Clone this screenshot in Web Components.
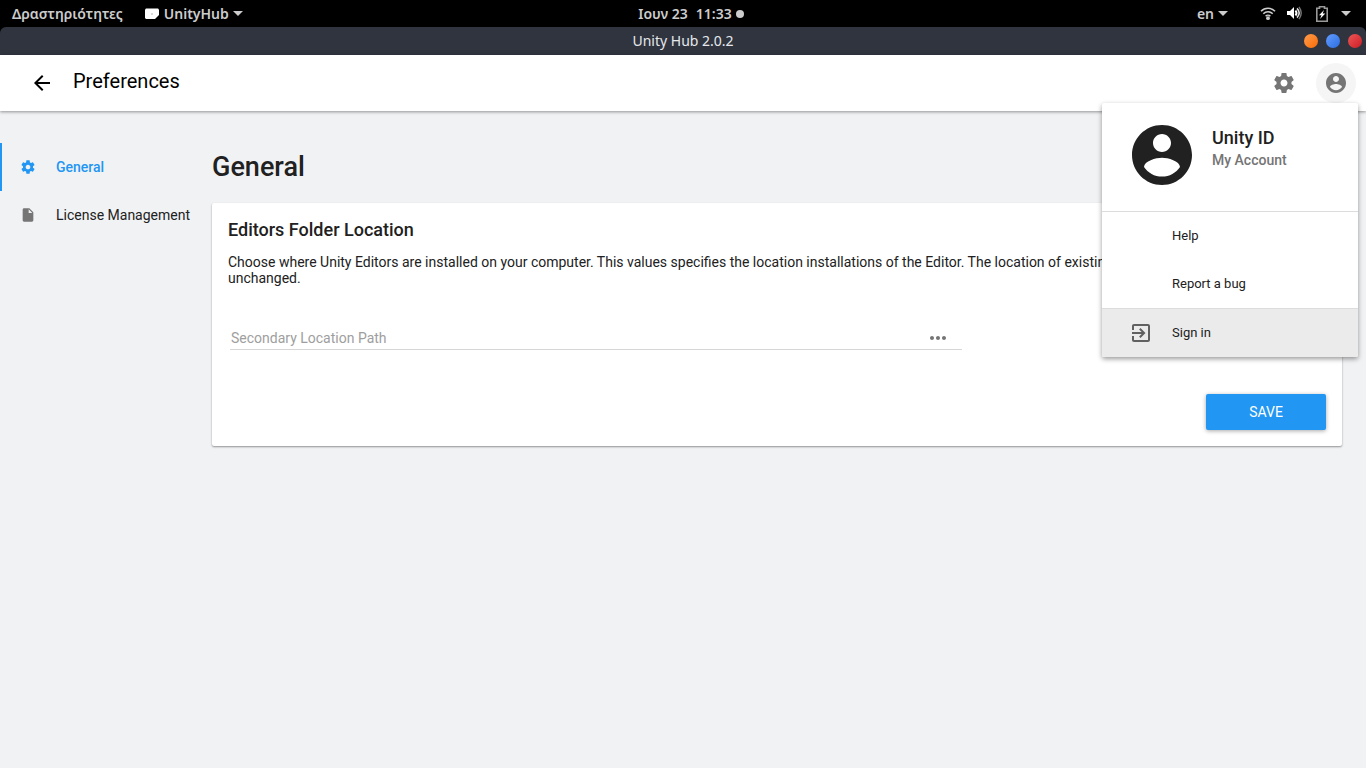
<!DOCTYPE html>
<html lang="en">
<head>
<meta charset="utf-8">
<meta name="viewport" content="width=device-width, initial-scale=1">
<title>Unity Hub 2.0.2</title>
<style>
    html, body {
        height: 100%;
        margin: 0;
    }
    body {
        background: #f1f2f4;
        color: #212121;
        font: 14px/16px Roboto, sans-serif;
    }
</style>
</head>
<body>
<hub-app></hub-app>
<script>
const icons = {
    back: 'M20 11H7.83l5.59-5.59L12 4l-8 8 8 8 1.41-1.41L7.83 13H20v-2z',
    gear: 'M19.43 12.98c.04-.32.07-.64.07-.98s-.03-.66-.07-.98l2.11-1.65c.19-.15.24-.42.12-.64l-2-3.46c-.12-.22-.39-.3-.61-.22l-2.49 1c-.52-.4-1.08-.73-1.69-.98l-.38-2.65C14.46 2.18 14.25 2 14 2h-4c-.25 0-.46.18-.49.42l-.38 2.65c-.61.25-1.17.59-1.69.98l-2.49-1c-.23-.09-.49 0-.61.22l-2 3.46c-.13.22-.07.49.12.64l2.11 1.65c-.04.32-.07.65-.07.98s.03.66.07.98l-2.11 1.65c-.19.15-.24.42-.12.64l2 3.46c.12.22.39.3.61.22l2.49-1c.52.4 1.08.73 1.69.98l.38 2.65c.03.24.24.42.49.42h4c.25 0 .46-.18.49-.42l.38-2.65c.61-.25 1.17-.59 1.69-.98l2.49 1c.23.09.49 0 .61-.22l2-3.46c.12-.22.07-.49-.12-.64l-2.11-1.65zM12 15.5c-1.93 0-3.5-1.57-3.5-3.5s1.57-3.5 3.5-3.5 3.5 1.57 3.5 3.5-1.57 3.5-3.5 3.5z',
    account: 'M12 2C6.48 2 2 6.48 2 12s4.48 10 10 10 10-4.48 10-10S17.52 2 12 2zm0 3c1.66 0 3 1.34 3 3s-1.34 3-3 3-3-1.34-3-3 1.34-3 3-3zm0 14.2c-2.5 0-4.71-1.28-6-3.22.03-1.99 4-3.08 6-3.08 1.99 0 5.97 1.09 6 3.08-1.29 1.94-3.5 3.22-6 3.22z',
    file: 'M6 2c-1.1 0-1.99.9-1.99 2L4 20c0 1.1.89 2 1.99 2H18c1.1 0 2-.9 2-2V8l-6-6H6zm7 7V3.5L18.5 9H13z',
    more: 'M6 10c-1.1 0-2 .9-2 2s.9 2 2 2 2-.9 2-2-.9-2-2-2zm12 0c-1.1 0-2 .9-2 2s.9 2 2 2 2-.9 2-2-.9-2-2-2zm-6 0c-1.1 0-2 .9-2 2s.9 2 2 2 2-.9 2-2-.9-2-2-2z',
    signin: 'M10.09 15.59L11.5 17l5-5-5-5-1.41 1.41L12.67 11H3v2h9.67l-2.58 2.59zM19 3H5c-1.11 0-2 .9-2 2v4h2V5h14v14H5v-4H3v4c0 1.1.89 2 2 2h14c1.1 0 2-.9 2-2V5c0-1.1-.9-2-2-2z'
};

class HubIcon extends HTMLElement {
    get name() { return this.getAttribute('name') || ''; }
    connectedCallback() {
        if (this.shadowRoot)
            return;
        this.attachShadow({ mode: 'open' }).innerHTML = `
<style>
    :host {
        display: block;
        flex: none;
        width: var(--icon-size, 24px);
        height: var(--icon-size, 24px);
    }
    svg {
        display: block;
        width: 100%;
        height: 100%;
        fill: currentColor;
    }
</style>
<svg viewBox="0 0 24 24" aria-hidden="true"><path d="${icons[this.name]}"/></svg>
`;
    }
}
customElements.define('hub-icon', HubIcon);

class DesktopPanel extends HTMLElement {
    connectedCallback() {
        this.attachShadow({ mode: 'open' }).innerHTML = `
<style>
    :host {
        display: grid;
        grid-template-columns: 1fr auto 1fr;
        align-items: center;
        height: 27px;
        background: #000;
        color: #ccc;
        font: 600 14px/20px "Noto Sans", sans-serif;
    }
    div, button {
        display: flex;
        align-items: center;
    }
    button {
        padding: 0;
        border: 0;
        background: none;
        color: inherit;
        font: inherit;
    }
    svg { display: block; }
    .left {
        gap: 21px;
        padding-left: 12px;
    }
    .app, .lang { gap: 4px; }
    .clock {
        gap: 8px;
        padding-left: 16px;
    }
    .caret {
        border: 5px solid transparent;
        border-top-color: #ccc;
        border-bottom: 0;
    }
    .dot {
        width: 8px;
        height: 8px;
        margin-left: -4px;
        border-radius: 50%;
        background: #ccc;
    }
    .right {
        justify-content: flex-end;
        padding-right: 15px;
    }
    .status {
        gap: 11px;
        margin-left: 32px;
    }
</style>
<div class="left">
    <button>Δραστηριότητες</button>
    <button class="app">
        <svg width="16" height="16" viewBox="0 0 16 16"><path fill="#fff" d="M2 2.500h12l1 1v5.500l-4 4H2l-1-1V3.500z"/><circle cx="8" cy="8" r="1" fill="#ccc"/></svg>
        UnityHub <span class="caret"></span>
    </button>
</div>
<button class="clock"><span>Ιουν 23</span><span>11:33</span><span class="dot"></span></button>
<div class="right">
    <button class="lang">en <span class="caret"></span></button>
    <button class="status" aria-label="System">
        <svg width="16" height="16" viewBox="0 0 16 16" fill="none" stroke="#ccc"><path d="M1 5.200a9.800 9.800 0 0 1 14 0M3.300 7.800a6.500 6.500 0 0 1 9.400 0M5.600 10.200a3.400 3.400 0 0 1 4.800 0" stroke-width="1.600"/><circle cx="8" cy="12.200" r="1.900" fill="#ccc" stroke="none"/></svg>
        <svg width="16" height="16" viewBox="0 0 16 16" fill="none"><path fill="#fff" d="M0 5h3l4-4v12l-4-4H0z"/><path stroke="#fff" stroke-width="2" d="M8.500 4.500q2 2.500 0 5"/><path stroke="#ddd" stroke-width="1.600" d="M10 2.400q4.400 4.600 0 9.200"/><path stroke="#777" stroke-width="1.400" d="M12 .8q4.400 6.200 0 12.400"/></svg>
        <svg width="16" height="16" viewBox="0 0 16 16" fill="none"><path stroke="#999" stroke-width="1.600" d="M5.500 2.300V.8h5v1.500h2.700v12.900H2.800V2.300z"/><path fill="#fff" d="M10 4L5 9.200h2.500L6 13l5.300-5.500H8.700z"/></svg>
        <span class="caret"></span>
    </button>
</div>
`;
    }
}
customElements.define('desktop-panel', DesktopPanel);

class WindowTitlebar extends HTMLElement {
    connectedCallback() {
        this.attachShadow({ mode: 'open' }).innerHTML = `
<style>
    :host {
        display: block;
        background: #000;
    }
    .bar {
        display: grid;
        grid-template-columns: 1fr auto 1fr;
        align-items: center;
        height: 28px;
        border-radius: 6px 6px 0 0;
        background: #2f343f;
        color: #e6e8ec;
        font: 14px/20px "Noto Sans", sans-serif;
    }
    .controls {
        grid-column: 3;
        display: flex;
        justify-content: flex-end;
        gap: 8px;
        padding-right: 4px;
    }
    .title { grid-column: 2; }
    button {
        width: 14px;
        height: 14px;
        padding: 0;
        border: 0;
        border-radius: 50%;
    }
    .min { background: linear-gradient(135deg, #ff9d4d, #f96b05); }
    .max { background: linear-gradient(135deg, #639dff, #2b6de0); }
    .close { background: linear-gradient(135deg, #ee5757, #cc1d25); }
</style>
<div class="bar">
    <span class="title"><slot></slot></span>
    <div class="controls">
        <button class="min" aria-label="Minimize"></button>
        <button class="max" aria-label="Maximize"></button>
        <button class="close" aria-label="Close"></button>
    </div>
</div>
`;
    }
}
customElements.define('window-titlebar', WindowTitlebar);

class AccountMenu extends HTMLElement {
    connectedCallback() {
        this.attachShadow({ mode: 'open' }).innerHTML = `
<style>
    :host {
        display: block;
        width: 256px;
        border-radius: 2px;
        background: #fff;
        box-shadow: 0 2px 5px rgba(0, 0, 0, .4);
    }
    .profile {
        display: flex;
        gap: 14px;
        height: 92px;
        padding: 16px 24px 0;
        border-bottom: 1px solid #dcdcdc;
    }
    .profile hub-icon { --icon-size: 72px; }
    .names { padding-top: 7px; }
    .name {
        font-size: 18px;
        font-weight: 500;
        line-height: 24px;
    }
    .sub {
        color: #757575;
        font-weight: 500;
        line-height: 20px;
    }
    button {
        display: grid;
        grid-template-columns: 43px 1fr;
        align-items: center;
        width: 100%;
        height: 48px;
        padding: 0 24px 0 27px;
        border: 0;
        background: none;
        color: inherit;
        font: 13px/16px Roboto, sans-serif;
        text-align: left;
    }
    button hub-icon { color: #616161; }
    button span { grid-column: 2; }
    .current {
        height: 49px;
        border-top: 1px solid #dcdcdc;
        border-radius: 0 0 2px 2px;
        background: #ebebeb;
    }
</style>
<div class="profile">
    <hub-icon name="account"></hub-icon>
    <div class="names">
        <div class="name">Unity ID</div>
        <div class="sub">My Account</div>
    </div>
</div>
<button><span>Help</span></button>
<button><span>Report a bug</span></button>
<button class="current"><hub-icon name="signin"></hub-icon><span>Sign in</span></button>
`;
    }
}
customElements.define('account-menu', AccountMenu);

class HubToolbar extends HTMLElement {
    connectedCallback() {
        this.attachShadow({ mode: 'open' }).innerHTML = `
<style>
    :host {
        display: flex;
        align-items: center;
        position: relative;
        z-index: 1;
        height: 56px;
        padding: 0 10px 0 22px;
        background: #fff;
        box-shadow: 0 1px 3px rgba(0, 0, 0, .4);
    }
    h1 {
        flex: 1;
        margin: 0 0 4px 11px;
        color: #000;
        font-size: 20px;
        font-weight: 400;
        line-height: 24px;
    }
    button {
        display: grid;
        place-items: center;
        width: 40px;
        height: 40px;
        padding: 0;
        border: 0;
        border-radius: 50%;
        background: none;
        color: #757575;
    }
    .back { color: #000; }
    .account {
        margin-left: 12px;
        background: #f5f5f5;
    }
    account-menu {
        position: absolute;
        top: 48px;
        right: 8px;
    }
</style>
<button class="back" aria-label="Back"><hub-icon name="back"></hub-icon></button>
<h1><slot></slot></h1>
<button aria-label="Settings"><hub-icon name="gear"></hub-icon></button>
<button class="account" aria-label="Account"><hub-icon name="account"></hub-icon></button>
<account-menu></account-menu>
`;
    }
}
customElements.define('hub-toolbar', HubToolbar);

class NavItem extends HTMLElement {
    get icon() { return this.getAttribute('icon') || ''; }
    connectedCallback() {
        this.attachShadow({ mode: 'open' }).innerHTML = `
<style>
    :host { display: block; }
    a {
        display: flex;
        align-items: center;
        gap: 20px;
        height: 48px;
        padding-left: 18px;
        border-left: 2px solid transparent;
        color: inherit;
        text-decoration: none;
        white-space: nowrap;
    }
    hub-icon {
        --icon-size: 16px;
        color: #757575;
    }
    :host([active]) a {
        border-color: #2196f3;
        color: #2196f3;
        font-weight: 500;
    }
    :host([active]) hub-icon { color: inherit; }
</style>
<a href="#"><hub-icon name="${this.icon}"></hub-icon><slot></slot></a>
`;
    }
}
customElements.define('nav-item', NavItem);

class PreferencesCard extends HTMLElement {
    connectedCallback() {
        this.attachShadow({ mode: 'open' }).innerHTML = `
<style>
    :host {
        display: block;
        padding: 16px;
        border-radius: 2px;
        background: #fff;
        box-shadow: 0 1px 2px rgba(0, 0, 0, .4);
    }
    h3 {
        margin: 0 0 13px;
        font-size: 18px;
        font-weight: 500;
        line-height: 22px;
    }
    p { margin: 0; }
    .field {
        display: flex;
        align-items: center;
        box-sizing: border-box;
        width: calc(100% * 2 / 3);
        height: 24px;
        margin: 40px 2px 44px;
        padding-right: 12px;
        border-bottom: 1px solid #d6d6d6;
    }
    input {
        flex: 1;
        min-width: 0;
        padding: 0 1px;
        border: 0;
        outline: 0;
        background: none;
        color: inherit;
        font: inherit;
    }
    input::placeholder {
        color: #9e9e9e;
        opacity: 1;
    }
    button {
        padding: 0;
        border: 0;
        background: none;
        color: #757575;
    }
    .save {
        display: block;
        width: 120px;
        height: 36px;
        margin-left: auto;
        border-radius: 2px;
        background: #2196f3;
        box-shadow: 0 1px 4px rgba(0, 0, 0, .35);
        color: #fff;
        font: inherit;
    }
</style>
<h3>Editors Folder Location</h3>
<p>Choose where Unity Editors are installed on your computer. This values specifies the location installations of the Editor. The location of existing installations will remain unchanged.</p>
<div class="field">
    <input type="text" placeholder="Secondary Location Path" aria-label="Secondary Location Path">
    <button aria-label="Browse"><hub-icon name="more"></hub-icon></button>
</div>
<button class="save">SAVE</button>
`;
    }
}
customElements.define('preferences-card', PreferencesCard);

class HubApp extends HTMLElement {
    connectedCallback() {
        this.attachShadow({ mode: 'open' }).innerHTML = `
<style>
    :host {
        display: flex;
        flex-direction: column;
        min-height: 100%;
    }
    .body {
        display: grid;
        grid-template-columns: 212px 1fr;
        padding: 32px 24px 24px 0;
    }
    h2 {
        margin: 8px 0 20px;
        font-size: 27px;
        font-weight: 500;
        line-height: 32px;
    }
</style>
<desktop-panel></desktop-panel>
<window-titlebar>Unity Hub 2.0.2</window-titlebar>
<hub-toolbar>Preferences</hub-toolbar>
<div class="body">
    <nav>
        <nav-item icon="gear" active>General</nav-item>
        <nav-item icon="file">License Management</nav-item>
    </nav>
    <main>
        <h2>General</h2>
        <preferences-card></preferences-card>
    </main>
</div>
`;
    }
}
customElements.define('hub-app', HubApp);
</script>
</body>
</html>
